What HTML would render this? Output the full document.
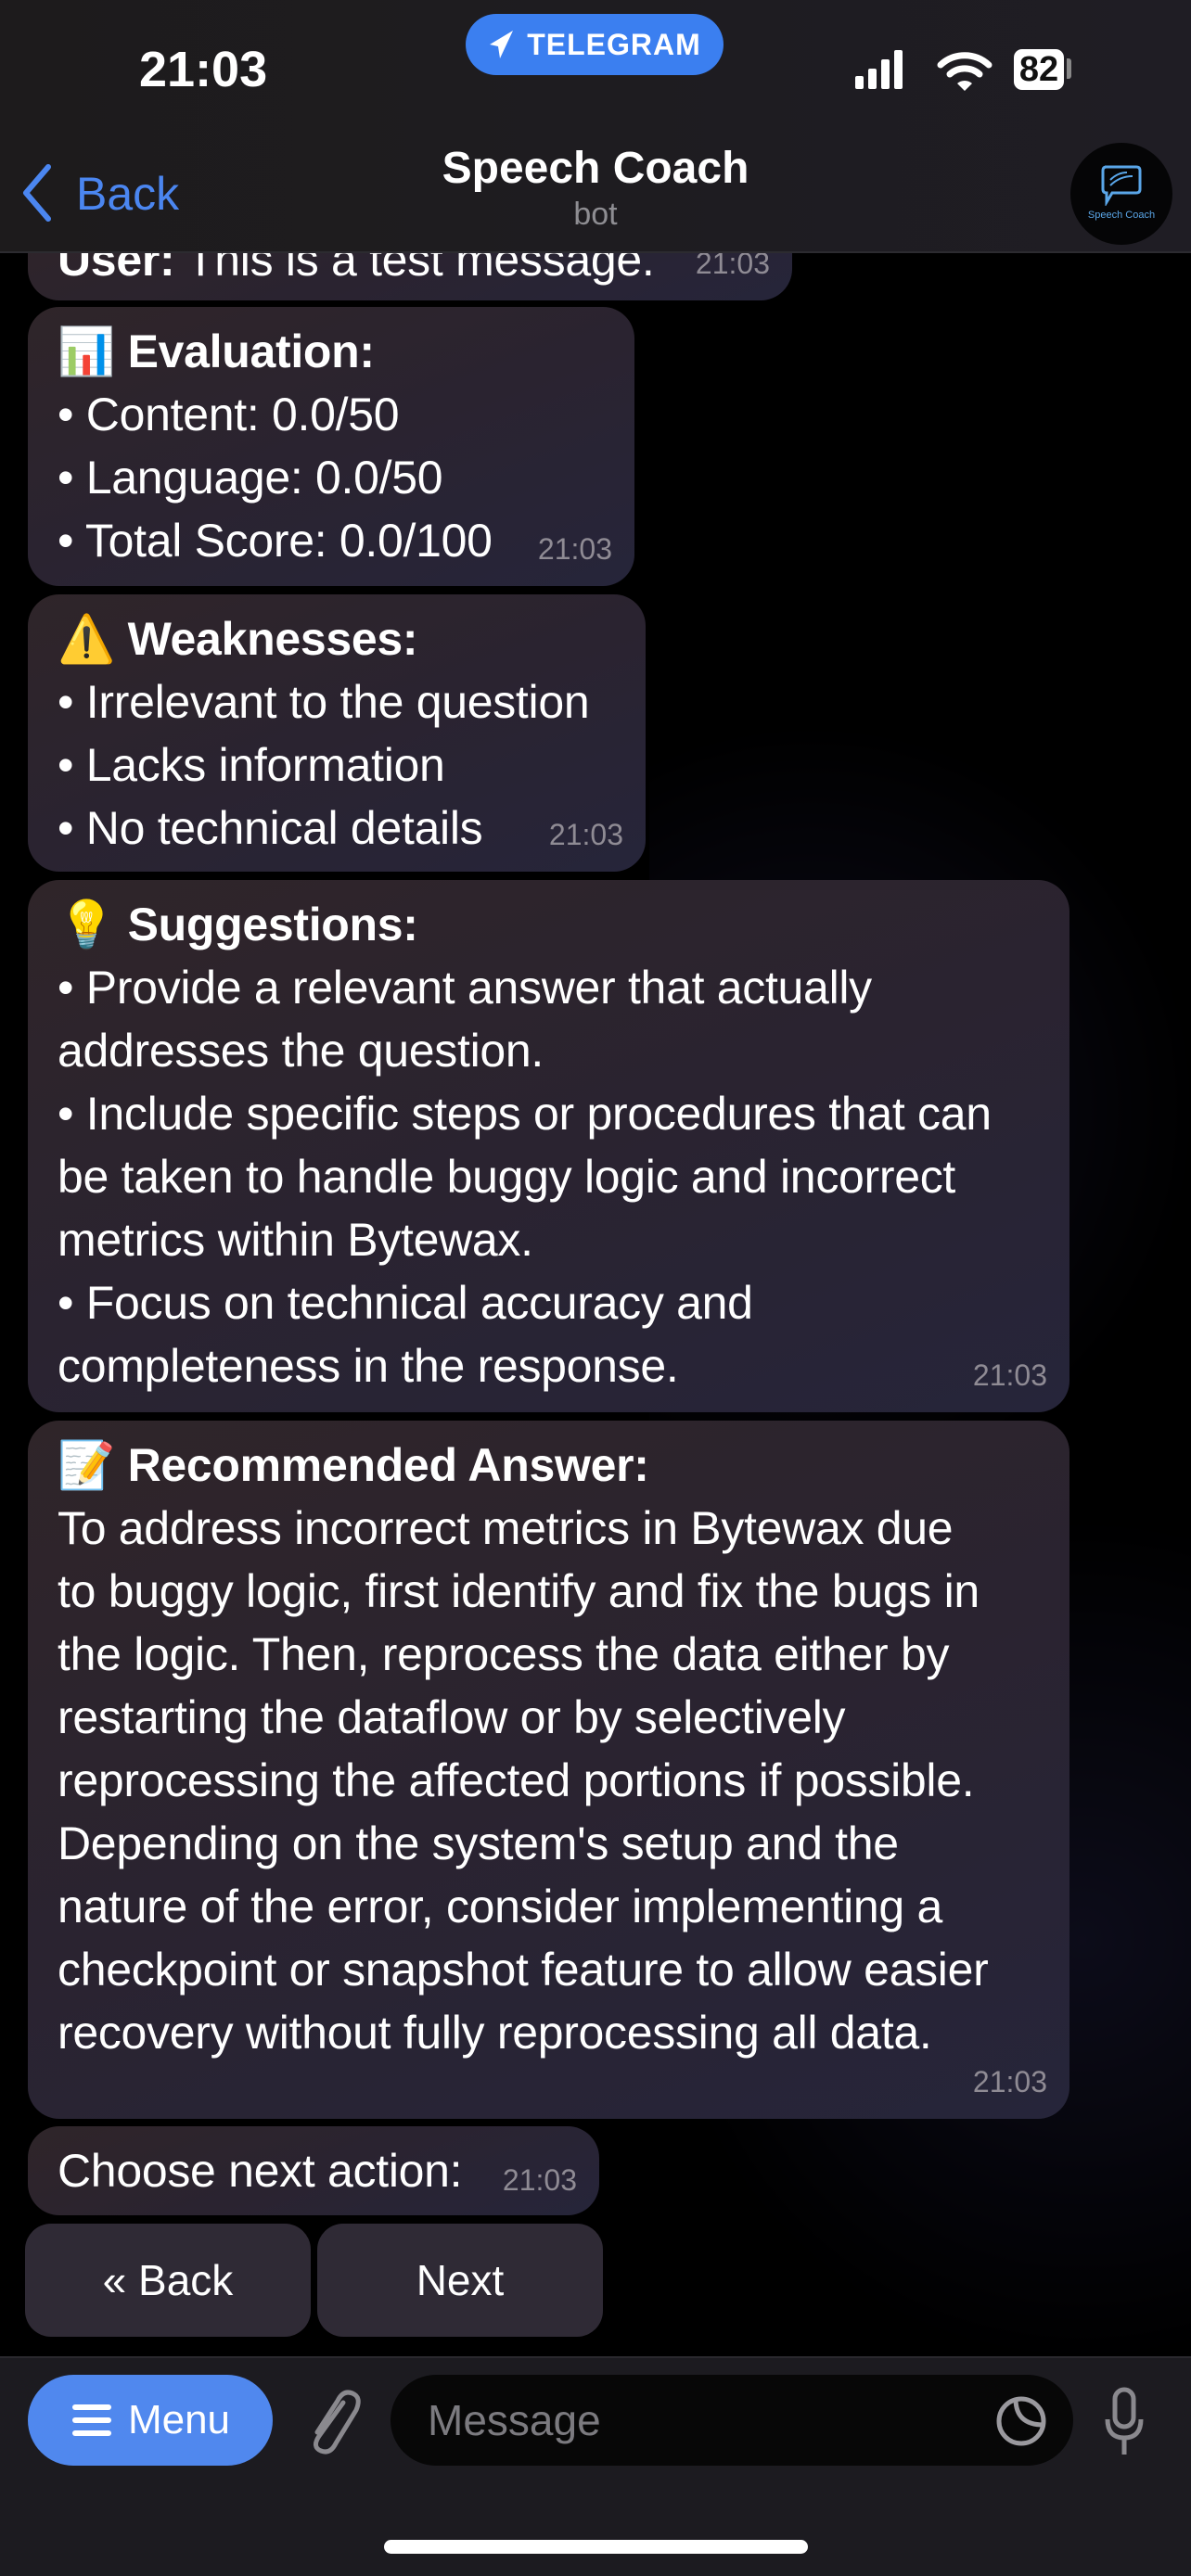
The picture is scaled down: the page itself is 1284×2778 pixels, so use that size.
<!DOCTYPE html>
<html><head><meta charset="utf-8"><style>
*{margin:0;padding:0;box-sizing:border-box}
body{width:1284px;height:2778px;background:#000;position:relative;overflow:hidden;font-family:"Liberation Sans","Noto Sans CJK SC",sans-serif;color:#fff}
.top{position:absolute;left:0;top:0;width:1284px;height:273px;background:linear-gradient(90deg,#1d1b1c,#1f1d24);border-bottom:2px solid #2c2b30}
.b{position:absolute;left:30px;border-radius:34px;background:linear-gradient(160deg,#2f2529 0%,#2a2330 50%,#26253a 100%);font-size:50px;line-height:68px;padding:14px 0 0 32px;white-space:nowrap;letter-spacing:-0.3px}
.t{position:absolute;right:24px;bottom:6px;font-size:32px;color:#8f8b94;letter-spacing:0}
.bold{font-weight:bold}
.btn{position:absolute;top:2398px;height:122px;border-radius:28px;background:#2f2a35;font-size:46px;display:flex;align-items:center;justify-content:center}
.bar{position:absolute;left:0;top:2541px;width:1284px;height:237px;background:#1c1b20;border-top:2px solid #2a292e}
</style></head><body>
<div style="position:absolute;left:700px;top:300px;width:584px;height:2240px;opacity:.35;background:radial-gradient(circle at 30% 40%,#2a2850 0,transparent 30%),radial-gradient(circle at 80% 80%,#25244a 0,transparent 25%)"></div>

<div class="b" style="top:232px;width:824px;height:92px"><span class="bold">User:</span> This is a test message.<span class="t">21:03</span></div>

<div class="top">
 <div style="position:absolute;left:502px;top:15px;width:278px;height:66px;border-radius:33px;background:#3b7ff0;display:flex;align-items:center;justify-content:center;font-size:32px;font-weight:bold;letter-spacing:1px">
  <svg width="30" height="34" viewBox="0 0 30 34" style="margin-right:12px"><path d="M27 2 L2 17 L11 19 L13 32 Z" fill="#fff"/></svg>TELEGRAM</div>
 <div style="position:absolute;left:150px;top:44px;font-size:54px;font-weight:bold">21:03</div>
 <svg style="position:absolute;left:920px;top:52px" width="60" height="46"><rect x="2" y="30" width="9" height="14" rx="2" fill="#fff"/><rect x="16" y="22" width="9" height="22" rx="2" fill="#fff"/><rect x="30" y="12" width="9" height="32" rx="2" fill="#fff"/><rect x="44" y="2" width="9" height="42" rx="2" fill="#fff"/></svg>
 <svg style="position:absolute;left:1010px;top:52px" width="60" height="46" viewBox="0 0 60 46"><path d="M4 18 A38 38 0 0 1 56 18" stroke="#fff" stroke-width="7" fill="none" stroke-linecap="round"/><path d="M14 28 A24 24 0 0 1 46 28" stroke="#fff" stroke-width="7" fill="none" stroke-linecap="round"/><path d="M22 38 L30 46 L38 38 A12 12 0 0 0 22 38Z" fill="#fff"/></svg>
 <div style="position:absolute;left:1093px;top:53px;width:54px;height:44px;border-radius:9px;background:#fff;color:#111;font-size:38px;font-weight:bold;text-align:center;line-height:44px">82</div>
 <div style="position:absolute;left:1150px;top:63px;width:5px;height:22px;border-radius:0 3px 3px 0;background:#888"></div>
 <svg style="position:absolute;left:20px;top:176px" width="40" height="64"><path d="M32 4 L8 32 L32 60" stroke="#4b86f0" stroke-width="6" fill="none" stroke-linecap="round" stroke-linejoin="round"/></svg>
 <div style="position:absolute;left:82px;top:180px;font-size:50px;color:#4b86f0">Back</div>
 <div style="position:absolute;left:0;width:1284px;top:154px;text-align:center;font-size:48px;font-weight:bold">Speech Coach</div>
 <div style="position:absolute;left:0;width:1284px;top:212px;text-align:center;font-size:34px;color:#8e8d92">bot</div>
 <div style="position:absolute;left:1154px;top:154px;width:110px;height:110px;border-radius:55px;background:#050506">
  <svg style="position:absolute;left:31px;top:22px" width="48" height="46"><path d="M6 4 H40 Q44 4 44 8 V28 Q44 32 40 32 H14 L8 42 V32 Q4 32 4 28 V8 Q4 4 8 4Z" stroke="#5aa6e8" stroke-width="3" fill="none"/><path d="M12 24 Q22 14 36 14 M12 18 Q20 10 30 10" stroke="#5aa6e8" stroke-width="2" fill="none"/></svg>
  <div style="position:absolute;top:72px;width:110px;text-align:center;font-size:11px;color:#5aa6e8">Speech Coach</div>
 </div>
</div>

<div class="b" style="top:331px;width:654px;height:301px"><span>📊</span> <span class="bold">Evaluation:</span><br>• Content: 0.0/50<br>• Language: 0.0/50<br>• Total Score: 0.0/100<span class="t">21:03</span></div>

<div class="b" style="top:641px;width:666px;height:299px">⚠️ <span class="bold">Weaknesses:</span><br>• Irrelevant to the question<br>• Lacks information<br>• No technical details<span class="t">21:03</span></div>

<div class="b" style="top:949px;width:1123px;height:574px">💡 <span class="bold">Suggestions:</span><br>• Provide a relevant answer that actually<br>addresses the question.<br>• Include specific steps or procedures that can<br>be taken to handle buggy logic and incorrect<br>metrics within Bytewax.<br>• Focus on technical accuracy and<br>completeness in the response.<span class="t">21:03</span></div>

<div class="b" style="top:1532px;width:1123px;height:753px">📝 <span class="bold">Recommended Answer:</span><br>To address incorrect metrics in Bytewax due<br>to buggy logic, first identify and fix the bugs in<br>the logic. Then, reprocess the data either by<br>restarting the dataflow or by selectively<br>reprocessing the affected portions if possible.<br>Depending on the system's setup and the<br>nature of the error, consider implementing a<br>checkpoint or snapshot feature to allow easier<br>recovery without fully reprocessing all data.<span class="t">21:03</span></div>

<div class="b" style="top:2293px;width:616px;height:96px">Choose next action:<span class="t" style="bottom:4px">21:03</span></div>

<div class="btn" style="left:27px;width:308px">« Back</div>
<div class="btn" style="left:342px;width:308px">Next</div>

<div class="bar">
 <div style="position:absolute;left:30px;top:18px;width:264px;height:98px;border-radius:49px;background:#5088ee;display:flex;align-items:center;justify-content:center;font-size:44px">
  <svg width="46" height="38" style="margin-right:16px"><rect x="2" y="2" width="42" height="6" rx="3" fill="#fff"/><rect x="2" y="16" width="42" height="6" rx="3" fill="#fff"/><rect x="2" y="30" width="42" height="6" rx="3" fill="#fff"/></svg>Menu</div>
 <svg style="position:absolute;left:326px;top:30px" width="66" height="76" viewBox="0 0 66 76"><path d="M44 18 L18 54 Q10 66 20 70 Q30 74 36 62 L58 26 Q64 12 54 8 Q44 4 38 16 L16 50" stroke="#8a898e" stroke-width="5" fill="none" stroke-linecap="round"/></svg>
 <div style="position:absolute;left:421px;top:18px;width:736px;height:98px;border-radius:49px;background:#070707">
  <div style="position:absolute;left:40px;top:22px;font-size:46px;color:#7b7a7f">Message</div>
  <svg style="position:absolute;left:650px;top:20px" width="60" height="60" viewBox="0 0 60 60"><circle cx="30" cy="30" r="24" stroke="#9a999e" stroke-width="5" fill="none"/><path d="M24 6 Q24 34 54 34" stroke="#9a999e" stroke-width="5" fill="none"/></svg>
 </div>
 <svg style="position:absolute;left:1190px;top:30px" width="44" height="78" viewBox="0 0 44 78"><rect x="12" y="4" width="20" height="40" rx="10" stroke="#8a898e" stroke-width="5" fill="none"/><path d="M4 36 Q4 56 22 56 Q40 56 40 36 M22 56 V74" stroke="#8a898e" stroke-width="5" fill="none"/></svg>
 <div style="position:absolute;left:414px;top:196px;width:457px;height:15px;border-radius:8px;background:#fff"></div>
</div>
</body></html>
